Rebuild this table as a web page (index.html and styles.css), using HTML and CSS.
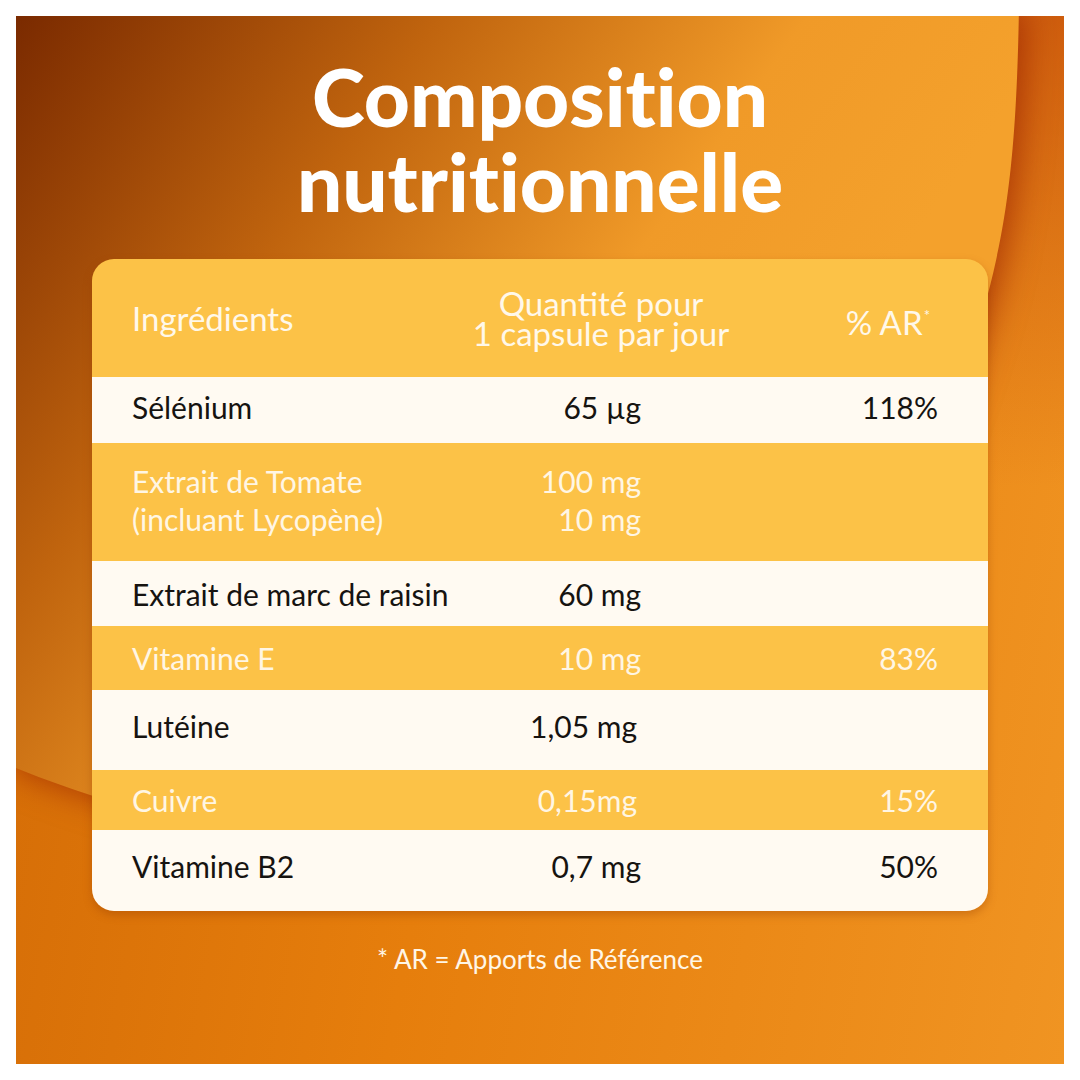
FILE: index.html
```html
<!DOCTYPE html>
<html lang="fr">
<head>
<meta charset="utf-8">
<title>Composition nutritionnelle</title>
<link rel="stylesheet" href="styles.css">
</head>
<body>
<div class="frame">
  <svg class="bg-shape" viewBox="0 0 1048 1048" width="1048" height="1048" aria-hidden="true">
    <defs>
      <linearGradient id="shapeGrad" gradientUnits="userSpaceOnUse" x1="0" y1="0" x2="700" y2="500">
        <stop offset="0" stop-color="#7a2a00"/>
        <stop offset="0.4" stop-color="#c0640e"/>
        <stop offset="0.75" stop-color="#f09a28"/>
        <stop offset="1" stop-color="#f4a12c"/>
      </linearGradient>
    </defs>
    <path class="shape" d="M-10,-10 L1003,-10 C1000,180 985,250 940,380 C860,620 560,830 300,820 C180,815 80,785 -10,748 Z" fill="url(#shapeGrad)"/>
  </svg>
  <div class="content">
    <h1 class="title">Composition<br>nutritionnelle</h1>
    <div class="table">
      <div class="row head">
        <div class="name">Ingrédients</div>
        <div class="qty">Quantité pour<br>1 capsule par jour</div>
        <div class="pct">% AR<span class="star">*</span></div>
      </div>
      <div class="row light r-selenium">
        <div class="name">Sélénium</div>
        <div class="qty">65 µg</div>
        <div class="pct">118%</div>
      </div>
      <div class="row yellow r-tomate">
        <div class="name">Extrait de Tomate<br>(incluant Lycopène)</div>
        <div class="qty">100 mg<br>10 mg</div>
        <div class="pct"></div>
      </div>
      <div class="row light r-marc">
        <div class="name">Extrait de marc de raisin</div>
        <div class="qty">60 mg</div>
        <div class="pct"></div>
      </div>
      <div class="row yellow r-vite">
        <div class="name">Vitamine E</div>
        <div class="qty">10 mg</div>
        <div class="pct">83%</div>
      </div>
      <div class="row light r-luteine">
        <div class="name">Lutéine</div>
        <div class="qty q-shift">1,05 mg</div>
        <div class="pct"></div>
      </div>
      <div class="row yellow r-cuivre">
        <div class="name">Cuivre</div>
        <div class="qty q-shift">0,15mg</div>
        <div class="pct">15%</div>
      </div>
      <div class="row light r-b2">
        <div class="name">Vitamine B2</div>
        <div class="qty">0,7 mg</div>
        <div class="pct">50%</div>
      </div>
    </div>
    <p class="note">* AR = Apports de Référence</p>
  </div>
</div>
</body>
</html>
```
FILE: styles.css
```css
* { box-sizing: border-box; }

html, body {
  margin: 0;
  padding: 0;
  background: #ffffff;
}

body {
  font-family: "Lato", "Noto Sans", "Liberation Sans", sans-serif;
}

.frame {
  position: relative;
  width: 1048px;
  height: 1048px;
  margin: 16px;
  overflow: hidden;
  background:
    linear-gradient(to bottom, rgba(175, 45, 0, 0.5) 0%, rgba(175, 45, 0, 0) 45%),
    linear-gradient(100deg, #d26a06 0%, #e67e0c 45%, #f09422 100%);
}

.bg-shape {
  position: absolute;
  left: 0;
  top: 0;
  display: block;
}

.shape {
  filter: drop-shadow(6px 4px 16px rgba(150, 30, 0, 0.65));
}

.content {
  position: relative;
  display: flex;
  flex-direction: column;
  align-items: center;
}

.title {
  margin: 38px 0 0;
  font-size: 80px;
  line-height: 85px;
  font-weight: 900;
  color: #ffffff;
  text-align: center;
  font-variant-ligatures: none;
}

.table {
  margin-top: 35px;
  width: 896px;
  border-radius: 22px;
  overflow: hidden;
  box-shadow: 0 4px 8px rgba(150, 60, 0, 0.35);
}

.row {
  display: grid;
  grid-template-columns: 309px 200px 1fr;
  align-items: center;
  padding: 0 50px 0 40px;
  font-size: 30px;
  line-height: 38px;
}

.row .name {
  white-space: nowrap;
}

.row .qty,
.row .pct {
  text-align: right;
  white-space: nowrap;
}

.row .q-shift {
  padding-right: 4px;
}

.light {
  background: #fffaf2;
  color: #161310;
}

.yellow {
  background: #fcc247;
  color: #fff6e4;
}

.head {
  height: 118px;
  background: #fcc247;
  color: #fff8ea;
  grid-template-columns: 309px 320px 1fr;
  font-size: 33px;
}

.head .qty {
  text-align: center;
  line-height: 30px;
}

.head .pct {
  padding-right: 8px;
}

.star {
  font-size: 15px;
  vertical-align: 14px;
  margin-left: 1px;
}

.r-selenium { height: 66px; padding-bottom: 6px; }
.r-tomate { height: 118px; padding-bottom: 4px; }
.r-marc { height: 65px; }
.r-vite { height: 64px; }
.r-luteine { height: 80px; padding-bottom: 8px; }
.r-cuivre { height: 60px; }
.r-b2 { height: 81px; padding-bottom: 10px; }

.note {
  margin: 32px 0 0;
  font-size: 26px;
  line-height: 32px;
  color: #fff6e6;
  text-align: center;
}
```
